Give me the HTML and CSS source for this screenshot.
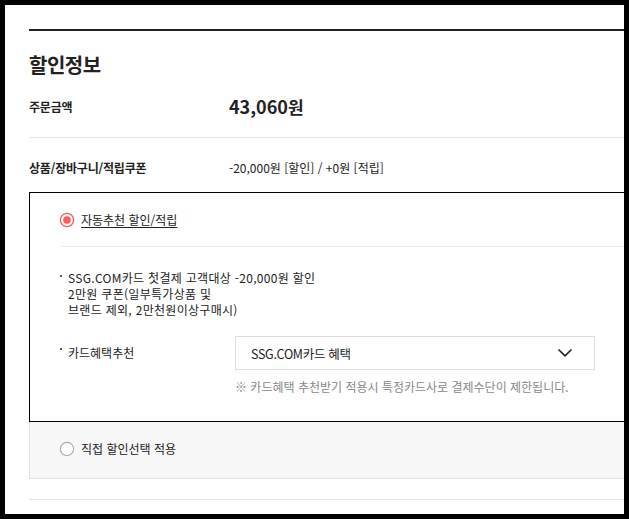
FILE: index.html
```html
<!DOCTYPE html>
<html lang="ko">
<head>
  <meta charset="UTF-8">
  <meta name="viewport" content="width=device-width, initial-scale=1.0">
  <title>할인정보</title>
  <link rel="stylesheet" href="styles.css">
</head>
<body>
  <div class="frame">
    <div class="container">
      <section class="discount">
        <h2 class="title">할인정보</h2>

        <div class="row row-total">
          <div class="row-label">주문금액</div>
          <div class="row-value total">43,060<span class="won">원</span></div>
        </div>

        <div class="row row-coupon">
          <div class="row-label">상품/장바구니/적립쿠폰</div>
          <div class="row-value">-20,000원 [할인] / +0원 [적립]</div>
        </div>

        <div class="option option-active">
          <label class="option-head">
            <svg class="radio" width="16" height="16" viewBox="0 0 16 16">
              <circle cx="8" cy="8" r="6.6" fill="#fff" stroke="#ff5b59" stroke-width="1.3"/>
              <circle cx="8" cy="8" r="3.8" fill="#ff5b59"/>
            </svg>
            <span class="option-title underline">자동추천 할인/적립</span>
          </label>

          <div class="option-body">
            <ul class="benefits">
              <li class="benefit">
                <span class="dot"></span>
                <span class="benefit-text">SSG.COM카드 첫결제 고객대상 -20,000원 할인<br>2만원 쿠폰(일부특가상품 및<br>브랜드 제외, 2만천원이상구매시)</span>
              </li>
            </ul>

            <div class="card-row">
              <div class="card-label"><span class="dot"></span>카드혜택추천</div>
              <div class="card-field">
                <div class="select">
                  <span class="select-text">SSG.COM카드 혜택</span>
                  <svg class="chevron" width="16" height="10" viewBox="0 0 16 10">
                    <path d="M1.5 1.5 L8 7.8 L14.5 1.5" fill="none" stroke="#222" stroke-width="1.6"/>
                  </svg>
                </div>
                <p class="note">※ 카드혜택 추천받기 적용시 특정카드사로 결제수단이 제한됩니다.</p>
              </div>
            </div>
          </div>
        </div>

        <div class="option option-off">
          <label class="option-head">
            <svg class="radio" width="16" height="16" viewBox="0 0 16 16">
              <circle cx="8" cy="8" r="6.6" fill="#fff" stroke="#aaa" stroke-width="1.1"/>
            </svg>
            <span class="option-title">직접 할인선택 적용</span>
          </label>
        </div>

        <div class="end-line"></div>
      </section>
    </div>
  </div>
</body>
</html>
```

FILE: styles.css
```css
html, body {
  margin: 0;
  padding: 0;
  background-color: #000;
}
body {
  font-family: "Noto Sans CJK KR", "Noto Sans", sans-serif;
  color: #222;
  font-size: 12px;
  letter-spacing: 0;
}
.frame {
  margin: 5px;
  height: 509px;
  background-color: #fff;
  overflow: hidden;
}
.container {
  padding: 24px 0 0 24px;
  width: 720px;
}
.discount {
  border-top: 2px solid #222;
}
.title {
  margin: 20px 0 0;
  font-size: 20px;
  line-height: 28px;
  font-weight: bold;
  letter-spacing: -0.5px;
}
.row {
  display: flex;
  align-items: center;
}
.row-label {
  width: 200px;
  font-weight: bold;
  line-height: 18px;
  letter-spacing: -0.2px;
}
.row-total {
  padding: 14px 0 17px;
  border-bottom: 1px solid #e5e5e5;
}
.total {
  font-size: 18px;
  font-weight: bold;
  line-height: 26px;
}
.won {
  font-size: 17px;
}
.row-coupon {
  padding: 21px 0 15px;
  line-height: 18px;
}
.option {
  padding-left: 30px;
}
.option-active {
  border: 1px solid #000;
  padding-bottom: 25px;
}
.option-head {
  display: flex;
  align-items: center;
  gap: 6px;
  height: 18px;
  line-height: 18px;
  margin-left: -1px;
}
.option-active .option-head {
  padding: 18px 0 17px;
}
.radio {
  display: block;
  flex: none;
}
.underline {
  text-decoration: underline;
  text-underline-offset: 2px;
}
.option-body {
  border-top: 1px solid #ebebeb;
  padding-top: 23px;
}
.benefits {
  list-style: none;
  margin: 0;
  padding: 0;
}
.benefit {
  display: flex;
  line-height: 16px;
}
.benefit-text {
  letter-spacing: 0.3px;
}
.dot {
  display: inline-block;
  flex: none;
  width: 2px;
  height: 2px;
  margin: 5px 6px 0 0;
  background-color: #555;
  align-self: flex-start;
}
.card-row {
  display: flex;
  margin-top: 18px;
}
.card-label {
  display: flex;
  width: 175px;
  height: 34px;
  align-items: center;
  line-height: 18px;
}
.card-label .dot {
  align-self: center;
  margin: -8px 6px 0 0;
}
.select {
  display: flex;
  align-items: center;
  justify-content: space-between;
  height: 32px;
  padding: 0 21px 0 15px;
  box-sizing: content-box;
  border: 1px solid #ddd;
  width: 322px;
}
.select-text {
  font-size: 12.5px;
  letter-spacing: -0.3px;
}
.chevron {
  display: block;
}
.note {
  margin: 8px 0 0;
  line-height: 18px;
  color: #888;
}
.option-off {
  background-color: #f7f7f7;
  border-left: 1px solid #e3e3e3;
  border-bottom: 1px solid #e3e3e3;
  padding-top: 18px;
  padding-bottom: 20px;
}
.end-line {
  margin-top: 20px;
  border-top: 1px solid #e3e3e3;
}
```
